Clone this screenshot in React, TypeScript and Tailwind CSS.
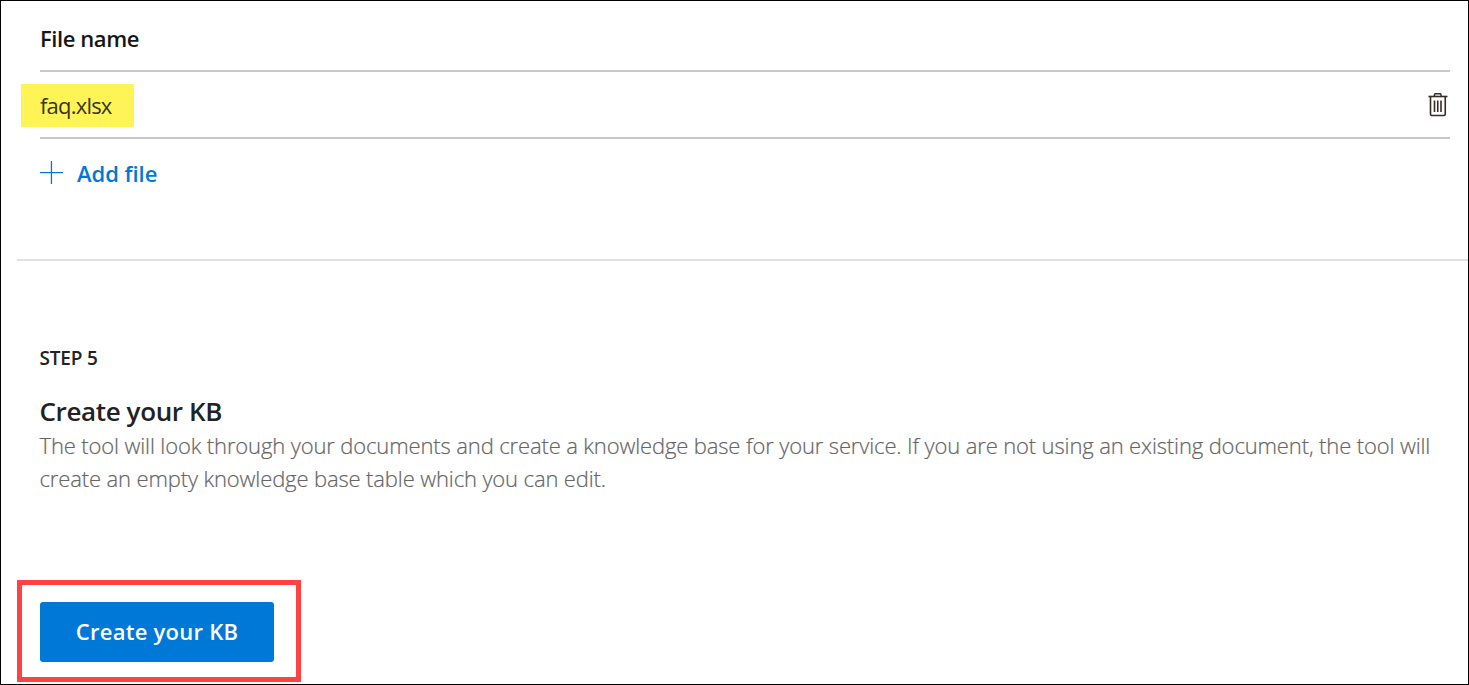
function PlusIcon() {
  return (
    <svg className="-mt-[2px] h-[23px] w-[23px] shrink-0" viewBox="0 0 23 23" fill="#0078d7">
      <rect x="0" y="11" width="23" height="1.2" />
      <rect x="10.8" y="0" width="1.3" height="23" />
    </svg>
  );
}

function TrashIcon() {
  return (
    <svg className="h-6 w-5" viewBox="0 0 20 24" fill="none" stroke="#3a2a26">
      <path d="M0.5 3.5H19.5" strokeWidth="1.6" />
      <path d="M6.5 3.5V1.5Q6.5 0.75 7.25 0.75H12.25Q13 0.75 13 1.5V3.5" strokeWidth="1.5" />
      <path d="M2.5 4V21.25Q2.5 22.5 3.75 22.5H16Q17.25 22.5 17.25 21.25V4" strokeWidth="1.6" />
      <path d="M6.5 7.5V19M9.75 7.5V19M13 7.5V19" strokeWidth="1.6" />
    </svg>
  );
}

export default function App() {
  return (
    <main className="flex h-[685px] w-[1469px] flex-col overflow-hidden border border-black bg-white pl-4 font-['Open_Sans','Noto_Sans',sans-serif] text-[#222]">
      <section className="flex h-[258px] shrink-0 flex-col pl-[23px] pr-[18px]">
        <div className="flex h-[71px] shrink-0 items-center border-b-2 border-[#c8c8c8] pt-[5px] text-[22px] font-semibold text-[#171717]">
          <span className="tracking-[-0.42px]">File name</span>
        </div>
        <div className="flex h-[67px] shrink-0 items-center justify-between border-b-2 border-[#c8c8c8] text-[22px]">
          <span className="mt-[2px] -ml-[19px] flex h-[43px] w-[113px] items-center bg-[#fff455] pl-[19px] tracking-[-0.8px] text-[#37351b]">faq.xlsx</span>
          <button type="button" aria-label="Delete file" className="mr-[2px]">
            <TrashIcon />
          </button>
        </div>
        <button type="button" className="flex h-[69px] items-center gap-[14px] self-start text-[22px] font-semibold text-[#0078d7]">
          <PlusIcon />
          <span className="tracking-[-0.03px]">Add file</span>
        </button>
      </section>
      <section className="flex grow flex-col border-t-2 border-[#e1e1e1]">
        <div className="flex h-[319px] shrink-0 flex-col pl-[22.5px] pt-[83px]">
          <p className="h-7 text-[19px] leading-7 font-semibold tracking-[-0.2px]">STEP 5</p>
          <h2 className="mt-[21px] h-9 text-[26px] leading-9 font-semibold tracking-[-0.38px] whitespace-nowrap">Create your KB</h2>
          <p className="text-[22px] leading-[33px] font-light tracking-[-0.132px] whitespace-nowrap text-[#666] [-webkit-text-stroke:0.2px_#666]">
            The tool will look through your documents and create a knowledge base for your service. If you are not using an existing document, the tool will
            <br />
            create an empty knowledge base table which you can edit.
          </p>
        </div>
        <div className="h-[102px] w-[284px] border-[5px] border-[#ff4343] pt-[17px] pl-[18px]">
          <button type="button" className="block h-[60px] w-[234px] rounded-[3px] bg-[#0078d7] pb-[2px] text-[22px] font-semibold tracking-[0.25px] whitespace-nowrap text-white">
            Create your KB
          </button>
        </div>
      </section>
    </main>
  );
}
